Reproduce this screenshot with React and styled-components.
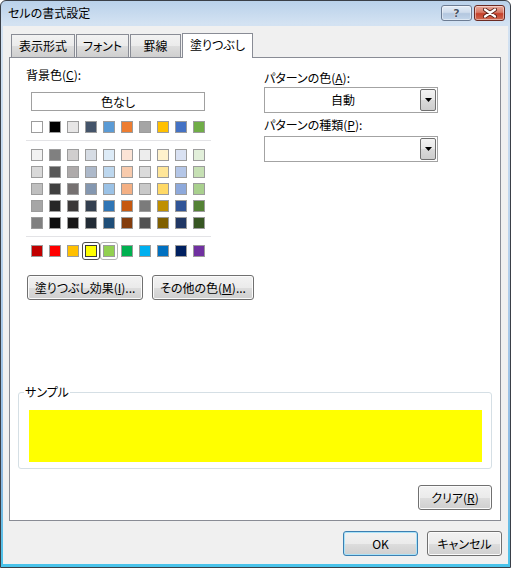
import styled, { createGlobalStyle } from 'styled-components';

const GlobalStyle = createGlobalStyle`
  html, body { margin: 0; padding: 0; background: #ffffff; }
  body {
    font-family: "Noto Sans CJK JP", "Noto Sans", sans-serif;
    font-size: 12px;
    color: #000;
    font-feature-settings: "palt";
  }
  * { box-sizing: border-box; }
`;

const THEME = ['#ffffff', '#000000', '#e7e6e6', '#44546a', '#5b9bd5', '#ed7d31', '#a5a5a5', '#ffc000', '#4472c4', '#70ad47'];

const TINTS = [
  ['#f2f2f2', '#808080', '#d0cece', '#d6dce4', '#ddebf7', '#fce4d6', '#ededed', '#fff2cc', '#d9e1f2', '#e2efda'],
  ['#d9d9d9', '#595959', '#aeaaaa', '#adb9ca', '#bdd7ee', '#f8cbad', '#dbdbdb', '#ffe699', '#b4c6e7', '#c6e0b4'],
  ['#bfbfbf', '#404040', '#767171', '#8497b0', '#9bc2e6', '#f4b084', '#c9c9c9', '#ffd966', '#8ea9db', '#a9d08e'],
  ['#a6a6a6', '#262626', '#3b3838', '#333f4f', '#2f75b5', '#c65911', '#7b7b7b', '#bf8f00', '#305496', '#548235'],
  ['#808080', '#0d0d0d', '#171616', '#222b35', '#1f4e78', '#833c0c', '#525252', '#806000', '#203764', '#375623'],
];

const STANDARD = ['#c00000', '#ff0000', '#ffc000', '#ffff00', '#92d050', '#00b050', '#00b0f0', '#0070c0', '#002060', '#7030a0'];

const TABS = [
  { label: '表示形式', width: 64 },
  { label: 'フォント', width: 53 },
  { label: '罫線', width: 51 },
  { label: '塗りつぶし', width: 71, active: true },
];

const Window = styled.div`
  width: 511px;
  height: 568px;
  border: 1px solid #3a3f47;
  border-radius: 6px 6px 0 0;
  background: linear-gradient(180deg, #b9d1ea 0%, #d3e2f2 4%, #bcd4ed 40%, #8ab8e2 85%, #48c3ea 100%);
  padding: 0 2px 3px 2px;
  display: flex;
  flex-direction: column;
`;

const TitleBar = styled.div`
  height: 25px;
  display: flex;
  align-items: flex-start;
  padding: 4px 3px 0 5px;
`;

const Title = styled.div`
  flex: 1;
  line-height: 16px;
  font-size: 12px;
  color: #000;
`;

const CaptionButtons = styled.div`
  display: flex;
  gap: 2px;
`;

const CaptionButton = styled.div`
  width: 31px;
  height: 16px;
  border: 1px solid ${p => (p.$close ? '#6b2a22' : '#6c7c93')};
  border-radius: 3px;
  background: ${p =>
    p.$close
      ? 'linear-gradient(180deg, #e9a99c 0%, #d77a66 45%, #c5402a 55%, #cf6a52 100%)'
      : 'linear-gradient(180deg, #e4edf7 0%, #cfdcec 45%, #b3c7df 55%, #c4d6ea 100%)'};
  box-shadow: inset 0 0 0 1px rgba(255, 255, 255, 0.45);
  display: flex;
  align-items: center;
  justify-content: center;
`;

const HelpGlyph = styled.span`
  font-family: "DejaVu Sans", sans-serif;
  font-weight: bold;
  font-size: 11px;
  line-height: 1;
  color: #4a5566;
  text-shadow: 0 0 1px #fff, 0 0 1px #fff;
`;

const Client = styled.div`
  flex: 1;
  background: #f0f0f0;
  padding: 7px 7px 0 6px;
  display: flex;
  flex-direction: column;
`;

const TabStrip = styled.div`
  display: flex;
  align-items: flex-end;
  height: 25px;
  padding-left: 2px;
  margin-bottom: -1px;
  position: relative;
  z-index: 1;
`;

const Tab = styled.div`
  width: ${p => p.$width}px;
  height: ${p => (p.$active ? 25 : 24)}px;
  margin-right: ${p => (p.$active ? 0 : 1)}px;
  border: 1px solid #898c95;
  border-bottom: ${p => (p.$active ? 'none' : '1px solid #898c95')};
  background: ${p => (p.$active ? '#ffffff' : 'linear-gradient(180deg, #f2f2f2 0%, #ebebeb 50%, #dddddd 51%, #cfcfcf 100%)')};
  display: flex;
  align-items: center;
  justify-content: center;
  padding-bottom: ${p => (p.$active ? 2 : 0)}px;
  line-height: 16px;
`;

const Panel = styled.div`
  height: 464px;
  border: 1px solid #898c95;
  background: #ffffff;
  display: flex;
  flex-direction: column;
  padding: 0 8px 9px 8px;
`;

const TopGrid = styled.div`
  display: grid;
  grid-template-columns: 228px 174px;
  column-gap: 10px;
  padding: 9px 0 0 8px;
`;

const Column = styled.div`
  display: flex;
  flex-direction: column;
  padding-top: ${p => p.$offset || 0}px;
`;

const Label = styled.div`
  line-height: 16px;
  height: 16px;
  margin-top: ${p => p.$gap || 0}px;
  white-space: nowrap;
`;

const NoColorButton = styled.div`
  width: 174px;
  height: 19px;
  margin: 9px 0 0 5px;
  border: 1px solid #a0a0a0;
  background: #ffffff;
  display: flex;
  align-items: center;
  justify-content: center;
  line-height: 16px;
`;

const SwatchGrid = styled.div`
  display: grid;
  grid-template-columns: repeat(10, 12px);
  column-gap: 6px;
  row-gap: 5px;
  margin: ${p => p.$top}px 0 0 5px;
`;

const Swatch = styled.div`
  width: 12px;
  height: 12px;
  border: 1px solid ${p => (p.$selected ? '#3a3a3a' : '#9c9c9c')};
  background: ${p => p.$color};
  position: relative;

  &::after {
    content: '';
    display: ${p => (p.$selected || p.$hover ? 'block' : 'none')};
    position: absolute;
    inset: -4px;
    border: 1px solid ${p => (p.$selected ? '#4a4a4a' : '#b4b4b4')};
    border-radius: 3px;
    box-shadow: inset 0 0 0 1px #ffffff;
  }
`;

const Divider = styled.div`
  width: 185px;
  height: 1px;
  background: #e3e3e6;
  margin-top: 7px;
`;

const ButtonRow = styled.div`
  display: flex;
  gap: 9px;
  margin: 18px 0 0 1px;
`;

const Button = styled.div`
  width: ${p => p.$width}px;
  height: 25px;
  border: 1px solid ${p => (p.$default ? '#3c7fb1' : '#707070')};
  border-radius: 3px;
  background: linear-gradient(180deg, #f2f2f2 0%, #ebebeb 50%, #dddddd 51%, #cfcfcf 100%);
  box-shadow: inset 0 0 0 1px ${p => (p.$default ? '#a9e2f8' : '#fbfbfb')};
  display: flex;
  align-items: center;
  justify-content: center;
  line-height: 16px;
  white-space: nowrap;
`;

const Combo = styled.div`
  width: 174px;
  height: 26px;
  margin-top: ${p => p.$gap}px;
  border: 1px solid #a3a3a3;
  background: #ffffff;
  display: flex;
  align-items: center;
  padding: 1px;
`;

const ComboText = styled.div`
  flex: 1;
  text-align: center;
  line-height: 16px;
`;

const ComboArrow = styled.div`
  width: 16px;
  height: 22px;
  border: 1px solid #707070;
  border-radius: 2px;
  background: linear-gradient(180deg, #f4f4f4 0%, #e8e8e8 50%, #d9d9d9 51%, #cdcdcd 100%);
  display: flex;
  align-items: center;
  justify-content: center;
`;

const SampleGroup = styled.div`
  position: relative;
  height: 77px;
  margin-top: 92px;
  border: 1px solid #d5dfe5;
  border-radius: 3px;
  padding: 17px 9px 0 10px;
`;

const GroupTitle = styled.span`
  position: absolute;
  top: -9px;
  left: 5px;
  padding: 0 1px;
  background: #ffffff;
  line-height: 16px;
`;

const SampleFill = styled.div`
  height: 52px;
  background: ${p => p.$color};
`;

const ClearRow = styled.div`
  display: flex;
  justify-content: flex-end;
  margin-top: 16px;
`;

const Footer = styled.div`
  display: flex;
  justify-content: flex-end;
  gap: 9px;
  margin: 10px -1px 0 0;
`;

const Arrow = () => (
  <svg width="7" height="4" viewBox="0 0 7 4">
    <path d="M0 0 H7 L3.5 4 Z" fill="#000" />
  </svg>
);

const CloseGlyph = () => (
  <svg width="14" height="10" viewBox="0 0 14 10">
    <path d="M2 1.5 L12 8.5 M12 1.5 L2 8.5" stroke="#5a2218" strokeWidth="4" strokeLinecap="round" />
    <path d="M2 1.5 L12 8.5 M12 1.5 L2 8.5" stroke="#ffffff" strokeWidth="2.2" strokeLinecap="round" />
  </svg>
);

const Grid = ({ colors, top, selected, hover }) => (
  <SwatchGrid $top={top}>
    {colors.map((c, i) => (
      <Swatch key={i} $color={c} $selected={i === selected} $hover={i === hover} />
    ))}
  </SwatchGrid>
);

export default function App() {
  return (
    <>
      <GlobalStyle />
      <Window>
        <TitleBar>
          <Title>セルの書式設定</Title>
          <CaptionButtons>
            <CaptionButton><HelpGlyph>?</HelpGlyph></CaptionButton>
            <CaptionButton $close><CloseGlyph /></CaptionButton>
          </CaptionButtons>
        </TitleBar>
        <Client>
          <TabStrip>
            {TABS.map(t => (
              <Tab key={t.label} $width={t.width} $active={t.active}>{t.label}</Tab>
            ))}
          </TabStrip>
          <Panel>
            <TopGrid>
              <Column>
                <Label>背景色(<u>C</u>):</Label>
                <NoColorButton>色なし</NoColorButton>
                <Grid colors={THEME} top={10} />
                <Divider />
                <Grid colors={TINTS.flat()} top={8} />
                <Divider />
                <Grid colors={STANDARD} top={8} selected={3} hover={4} />
                <ButtonRow>
                  <Button $width={116}>塗りつぶし効果(<u>I</u>)...</Button>
                  <Button $width={102}>その他の色(<u>M</u>)...</Button>
                </ButtonRow>
              </Column>
              <Column $offset={3}>
                <Label>パターンの色(<u>A</u>):</Label>
                <Combo $gap={1}>
                  <ComboText>自動</ComboText>
                  <ComboArrow><Arrow /></ComboArrow>
                </Combo>
                <Label $gap={4}>パターンの種類(<u>P</u>):</Label>
                <Combo $gap={3}>
                  <ComboText />
                  <ComboArrow><Arrow /></ComboArrow>
                </Combo>
              </Column>
            </TopGrid>
            <SampleGroup>
              <GroupTitle>サンプル</GroupTitle>
              <SampleFill $color="#ffff00" />
            </SampleGroup>
            <ClearRow>
              <Button $width={74}>クリア(<u>R</u>)</Button>
            </ClearRow>
          </Panel>
          <Footer>
            <Button $width={75} $default>OK</Button>
            <Button $width={75}>キャンセル</Button>
          </Footer>
        </Client>
      </Window>
    </>
  );
}
